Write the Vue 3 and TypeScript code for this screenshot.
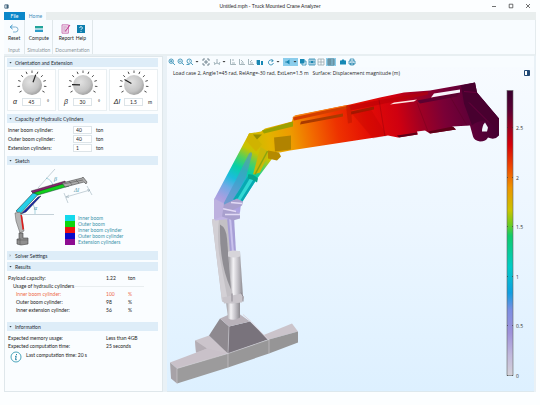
<script setup lang="ts">
import { ref } from 'vue'

interface Dial { id: string; symbol: string; unit: string; angle: number; value: string }
interface Tool { label: string; d: string; fill?: string; menu?: boolean; active?: boolean; tint?: string; gap?: boolean }

const dials = ref<Dial[]>([
  { id: 'alpha', symbol: 'α', unit: '°', angle: 20, value: '45' },
  { id: 'beta', symbol: 'β', unit: '°', angle: -88, value: '30' },
  { id: 'ext', symbol: 'Δl', unit: 'm', angle: -60, value: '1.5' },
])
const ticks = Array.from({ length: 11 }, (_, i) => -120 + i * 24)

const capacities = ref([
  { id: 'cap-inner', label: 'Inner boom cylinder:', value: '40' },
  { id: 'cap-outer', label: 'Outer boom cylinder:', value: '40' },
  { id: 'cap-ext', label: 'Extension cylinders:', value: '1' },
])

const legend = [
  { name: 'Inner boom', tone: 'cyan' },
  { name: 'Outer boom', tone: 'green' },
  { name: 'Inner boom cylinder', tone: 'red' },
  { name: 'Outer boom cylinder', tone: 'blue' },
  { name: 'Extension cylinders', tone: 'purple' },
]

const usage = [
  { name: 'Inner boom cylinder:', value: '100', alert: true },
  { name: 'Outer boom cylinder:', value: '98', alert: false },
  { name: 'Inner extension cylinder:', value: '56', alert: false },
]

const lens = 'M3.2 1a2.2 2.2 0 1 0 0 4.4a2.2 2.2 0 1 0 0-4.4M4.8 4.8L7 7'
const axes = 'M1.5 1v5.5h5.5M3 5h3'
const tools: Tool[] = [
  { label: 'Zoom in', d: lens + 'M2 3.2h2.4M3.2 2v2.4' },
  { label: 'Zoom out', d: lens + 'M2 3.2h2.4' },
  { label: 'Zoom box', d: lens + 'M.5 6.5h3M3 3h1', menu: true },
  { label: 'Zoom extents', d: 'M1 3V1h2M5 1h2v2M7 5v2H5M3 7H1V5M4 2v4M2 4h4', tint: '#59707c', gap: true },
  { label: 'Default view', d: 'M4 1v4M4 5L1 6.5M4 5l3 1.5M1 4l1 2M7 4l-1 2', tint: '#8aa0a8', menu: true, gap: true },
  { label: 'View XY', d: axes + 'M3 2h2', tint: '#8fa3ab', gap: true },
  { label: 'View YZ', d: axes + 'M3 2l2 2', tint: '#8fa3ab' },
  { label: 'View ZX', d: axes + 'M3 4l2-2', tint: '#8fa3ab' },
  { label: 'Projection', d: 'M1 2v4M3 2v4', fill: 'M1 2h3v5H1zM5 3h2v4H5z' },
  { label: 'Rotate', d: 'M6 3A2.5 2.5 0 1 0 6.4 5M4.5 1l1.8 2-2 .8', menu: true, gap: true },
  { label: 'Scene light', d: 'M1 4h3', fill: 'M5.5 1.5v5L2 4z', menu: true, active: true, gap: true },
  { label: 'Transparency', d: 'M3 3h4v4H3z', fill: 'M1 1h4.5v4.5H1z' },
  { label: 'Wireframe', d: 'M1 1h6v6H1zM3 1v6M5 1v6M1 4h6', fill: 'M3 3h2v2H3z' },
  { label: 'Show grid', d: 'M1 1h6v6H1zM4 1v6M1 4h6', tint: '#9aa9ae' },
  { label: 'Show legend', d: 'M1 1h6v6H1zM3 1v6M1 3h6M1 5h6', tint: '#58757f', active: true },
  { label: 'Snapshot', d: '', fill: 'M1 2.5h1.5l.7-1h1.7l.6 1H7v4H1z', gap: true },
  { label: 'Print', d: 'M2.2 3V1h3.6v2M1 3h6v3H1zM2.4 5h3.2v2H2.4z' },
]

const scale = [
  { y: 128, text: '2.5' }, { y: 178, text: '2' }, { y: 227, text: '1.5' },
  { y: 277, text: '1' }, { y: 326, text: '0.5' }, { y: 376, text: '0' },
]
</script>

<template>
  <div class="app">
    <header class="titlebar">
      <svg class="app-icon" viewBox="0 0 6 6"><path d="M1 1h4v4H1z" fill="#fff" stroke="#3d627c" /><path d="M3 1h2v4H3z" fill="#3d627c" /></svg>
      <h1>Untitled.mph - Truck Mounted Crane Analyzer</h1>
      <div class="win-controls">
        <button aria-label="Minimize"><svg viewBox="0 0 6 6"><path d="M1 3.5h4" /></svg></button>
        <button aria-label="Maximize"><svg viewBox="0 0 6 6"><path d="M1.2 1.2h3.6v3.6H1.2z" /></svg></button>
        <button aria-label="Close"><svg viewBox="0 0 6 6"><path d="M1 1l4 4M5 1L1 5" /></svg></button>
      </div>
    </header>

    <nav class="tabs">
      <button class="tab file">File</button>
      <button class="tab home">Home</button>
    </nav>

    <div class="ribbon">
      <section class="group">
        <div class="actions">
          <button>
            <svg viewBox="0 0 10 10"><path d="M1.5 3h5a2 2 0 0 1 0 5H4" fill="none" stroke="#7fb2d2" /><path d="M3.5 1L1.2 3l2.3 2" fill="none" stroke="#2b8fc5" /></svg>
            Reset
          </button>
        </div>
        <h2>Input</h2>
      </section>
      <section class="group">
        <div class="actions">
          <button>
            <svg viewBox="0 0 10 10"><path d="M1 2h8v2.4H1z" fill="#20a39a" /><path d="M1 5.6h8V8H1z" fill="#2c9bc6" /></svg>
            Compute
          </button>
        </div>
        <h2>Simulation</h2>
      </section>
      <section class="group">
        <div class="actions">
          <button>
            <svg viewBox="0 0 10 10"><path d="M1 .8h6.4v8.4H1z" fill="#f7e3f2" stroke="#c264a8" stroke-width=".8" /><path d="M2.2 3h3.6M2.2 5h2.4M2.2 7h3.6" stroke="#a9679e" stroke-width=".7" /><path d="M9.4 1.2L5 7l-1 .8.3-1.4L8.5.7z" fill="#c0398f" /></svg>
            Report
          </button>
          <button>
            <svg viewBox="0 0 10 10"><path d="M1 1h8v8H1z" fill="#0e7fae" /><path d="M3.7 3.9a1.3 1.3 0 1 1 1.9 1.2q-.6.3-.6.9M5 6.9v1" fill="none" stroke="#fff" stroke-width=".9" /></svg>
            Help
          </button>
        </div>
        <h2>Documentation</h2>
      </section>
    </div>

    <main class="workspace">
      <aside class="panel">
        <h3 class="bar"><i class="open"></i>Orientation and Extension</h3>
        <div class="dials">
          <div v-for="d in dials" :key="d.id" class="dial">
            <svg viewBox="0 0 30 26">
              <defs>
                <radialGradient :id="`knob-${d.id}`" cx=".38" cy=".35" r=".8">
                  <stop offset="0" stop-color="#e2e2e2" /><stop offset=".6" stop-color="#c4c4c4" /><stop offset="1" stop-color="#8c8c8c" />
                </radialGradient>
              </defs>
              <path v-for="t in ticks" :key="t" d="M15 3V.5" :transform="`rotate(${t} 15 15)`" stroke="#333" stroke-width=".8" />
              <circle cx="15" cy="15" r="10" :fill="`url(#knob-${d.id})`" />
              <path d="M15 12V4" :transform="`rotate(${d.angle} 15 15)`" stroke="#222" stroke-width="1.2" />
            </svg>
            <div class="dial-field">
              <label :for="d.id">{{ d.symbol }}</label>
              <input :id="d.id" v-model="d.value" type="text">
              <span>{{ d.unit }}</span>
            </div>
          </div>
        </div>

        <h3 class="bar"><i class="open"></i>Capacity of Hydraulic Cylinders</h3>
        <div class="capacities">
          <div v-for="c in capacities" :key="c.id" class="cap-row">
            <label :for="c.id">{{ c.label }}</label>
            <input :id="c.id" v-model="c.value" type="text">
            <span>ton</span>
          </div>
        </div>

        <h3 class="bar"><i class="open"></i>Sketch</h3>
        <div class="sketch">
          <svg class="sketch-art" viewBox="0 0 92 84">
            <g fill="none" stroke="#8fa5b0" stroke-width=".5">
              <path d="M14 48.5h33M31 22L48 3" />
              <path d="M57 27l4 10M80 20l5 9M59 31l24-7M59 31l3-2M59 31l3 .6M83 24l-3-.4M83 24l-2 2" />
              <path d="M39 12q6 2 7 8M26 38q3 5 2 10" stroke="#55a8bd" />
            </g>
            <path d="M9 45L26 27l6 .5L13 48z" fill="#25cfe8" stroke="#222" stroke-width=".5" />
            <path d="M14 48L31 31l3-1L19 46z" fill="#1624a8" stroke="#111" stroke-width=".4" />
            <path d="M25 26l32-9 5 3-31 9z" fill="#10cf1c" stroke="#143" stroke-width=".5" />
            <path d="M24 25L58 15l1 2L26 27z" fill="#86246e" stroke="#222" stroke-width=".4" />
            <path d="M55 17l20-5 1-1 4 5-1 2-2-2-19 5z" fill="#aaa" stroke="#444" stroke-width=".6" />
            <path d="M56 18l20-4M62 15l3 4M69 14l3 3" stroke="#555" stroke-width=".6" />
            <path d="M8 47l5-1 2 5 2 14-4 2-4-12z" fill="#b5b5b5" stroke="#555" stroke-width=".5" />
            <path d="M13.500 49h1.500l2 14-1.500 1z" fill="#e01a1a" />
            <path d="M12 67h4v5h5v6l-7 1-4-1v-5h2z" fill="#8f8f8f" stroke="#444" stroke-width=".6" />
            <path d="M10 74h11M13 72v7" stroke="#555" stroke-width=".5" />
            <g class="greek"><text x="47" y="15">β</text><text x="27" y="44">α</text><text x="67" y="26">Δl</text></g>
          </svg>
          <ul class="legend">
            <li v-for="l in legend" :key="l.name"><i :class="l.tone"></i>{{ l.name }}</li>
          </ul>
        </div>

        <h3 class="bar"><i class="closed"></i>Solver Settings</h3>
        <h3 class="bar"><i class="open"></i>Results</h3>
        <table class="results">
          <tbody>
            <tr><th>Payload capacity:</th><td>1.22</td><td>ton</td></tr>
            <tr class="sub"><th colspan="3"><div>Usage of hydraulic cylinders</div></th></tr>
            <tr v-for="u in usage" :key="u.name" class="nested" :class="{ alert: u.alert }">
              <th>{{ u.name }}</th><td>{{ u.value }}</td><td>%</td>
            </tr>
          </tbody>
        </table>

        <h3 class="bar"><i class="open"></i>Information</h3>
        <table class="results info-table">
          <tbody>
            <tr><th>Expected memory usage:</th><td>Less than 4GB</td></tr>
            <tr><th>Expected computation time:</th><td>25 seconds</td></tr>
          </tbody>
        </table>
        <p class="note">
          <svg viewBox="0 0 12 12"><circle cx="6" cy="6" r="5" fill="#fff" stroke="#3a9cb4" stroke-width=".9" /><path d="M6.500 3v1.200M5 5.300h1.200L5.500 8.700h1.300" fill="none" stroke="#2383a5" stroke-width="1" /></svg>
          <span>Last computation time: 20 s</span>
        </p>
      </aside>

      <section class="graphics">
        <div class="toolbar">
          <button v-for="t in tools" :key="t.label" :aria-label="t.label" :class="{ active: t.active, gap: t.gap }">
            <svg viewBox="0 0 8 8">
              <path v-if="t.fill" :d="t.fill" fill="#1688b5" />
              <path :d="t.d" fill="none" :stroke="t.tint ?? '#2585ae'" stroke-width=".8" />
            </svg>
            <i v-if="t.menu" class="caret"></i>
          </button>
        </div>
        <div class="canvas">
          <div class="caption">
            <p>Load case 2, Angle1=45 rad, RelAng=-30 rad, ExtLen=1.5 m&nbsp; &nbsp;Surface: Displacement magnitude (m)</p>
            <svg viewBox="0 0 6 6"><path d="M.5.5h5v5h-5z" fill="#fff" stroke="#234a76" /><path d="M3 .5h2.500v5H3z" fill="#234a76" /></svg>
          </div>
          <svg class="scene" viewBox="167 80 367 311">
            <defs>
              <linearGradient id="boom" gradientUnits="userSpaceOnUse" x1="247" y1="150" x2="500" y2="104">
                <stop offset="0" stop-color="#c3bd00" /><stop offset=".09" stop-color="#e2b400" />
                <stop offset=".18" stop-color="#ee9a00" /><stop offset=".26" stop-color="#f26a00" />
                <stop offset=".36" stop-color="#ee3200" /><stop offset=".48" stop-color="#e40d04" />
                <stop offset=".6" stop-color="#cf0010" /><stop offset=".68" stop-color="#a30022" />
                <stop offset=".78" stop-color="#7a0036" /><stop offset=".9" stop-color="#580038" />
                <stop offset="1" stop-color="#3d002e" />
              </linearGradient>
              <linearGradient id="inner" gradientUnits="userSpaceOnUse" x1="264" y1="142" x2="222" y2="218">
                <stop offset="0" stop-color="#ddb600" /><stop offset=".16" stop-color="#c8c400" />
                <stop offset=".28" stop-color="#52d05c" /><stop offset=".4" stop-color="#08cfa6" />
                <stop offset=".54" stop-color="#1bbddc" /><stop offset=".66" stop-color="#6faae6" />
                <stop offset=".8" stop-color="#a99fe0" /><stop offset="1" stop-color="#c2b6e4" />
              </linearGradient>
              <linearGradient id="steel" x1="0" x2="1" y1="0" y2="0">
                <stop offset="0" stop-color="#99979d" /><stop offset=".35" stop-color="#f3f2f5" />
                <stop offset=".65" stop-color="#c6c4ca" /><stop offset="1" stop-color="#8c8a90" />
              </linearGradient>
              <linearGradient id="bar" x1="0" x2="0" y1="0" y2="1">
                <stop offset="0" stop-color="#38002e" /><stop offset=".07" stop-color="#5c0034" />
                <stop offset=".14" stop-color="#a3001d" /><stop offset=".19" stop-color="#d60008" />
                <stop offset=".27" stop-color="#f04a00" /><stop offset=".34" stop-color="#ee9400" />
                <stop offset=".42" stop-color="#cbc400" /><stop offset=".47" stop-color="#6dcc20" />
                <stop offset=".51" stop-color="#10cc6c" /><stop offset=".62" stop-color="#00ccc8" />
                <stop offset=".71" stop-color="#109fe2" /><stop offset=".77" stop-color="#7c8ee2" />
                <stop offset=".85" stop-color="#9f92da" /><stop offset=".93" stop-color="#c1b9dc" />
                <stop offset="1" stop-color="#d3d1d8" />
              </linearGradient>
            </defs>

            <!-- concrete base -->
            <path d="M195 341L209 336L228 353L208 361L196 353z" fill="#cbc4cb" />
            <path d="M195 341L207 349L200 352L196 353z" fill="#b4adb4" />
            <path d="M170 363L207 349L228 354L177 369z" fill="#c9c1c9" />
            <path d="M170 363l7 6v15l-6-5z" fill="#a7a2a7" />
            <path d="M177 369L228 354V368L177 384z" fill="#9c9b9c" />
            <path d="M228 354L269 340V354L228 368z" fill="#989798" />
            <path d="M260 337L292 324L298 332L269 340z" fill="#cbc4cb" />
            <path d="M269 340L298 332V343L269 354z" fill="#969596" />
            <path d="M220 319L229 327L228 354L209 336z" fill="#8e898f" />
            <path d="M229 327L250 322L268 340L228 354z" fill="#79737c" />
            <path d="M220 319L236 312L250 322L229 327z" fill="#b9b2ba" />
            <path d="M243 315l8 7 17 18" fill="none" stroke="#dcd5de" stroke-width="1" />
            <path d="M177 369v15M228 354v14M269 340v14M229 327l-1 27M177 369l51-15 41-14" fill="none" stroke="#d8d4d9" stroke-width=".5" />

            <!-- slewing column -->
            <path d="M226 302h14v16q-6 4-12 1z" fill="url(#steel)" />
            <path d="M212 220L228 218L231 252L242 296L242 302Q232 306 222 302z" fill="#c3c0c5" />
            <path d="M212 220h7q-2 14 0 34l9 48-6-1z" fill="#d3d0d5" />
            <path d="M220 225Q226 228 227 239L231 290Q219 264 220 225z" fill="#8f8d93" />
            <path d="M227 218L234 217L236 253H230z" fill="#a79fd6" />
            <path d="M229 218h2l3 35h-2z" fill="#c9c2ec" />
            <path d="M228 252H240L243 297L233 300z" fill="url(#steel)" />
            <path d="M228 252q6-2 12 0v5q-6 2-12 0z" fill="#d7d5da" />
            <path d="M222 298L242 294L244 298L242 303L224 304z" fill="#c9c5cb" />
            <path d="M232 302v-8M241 293l2 4v5" fill="none" stroke="#8f8b93" stroke-width="1" />

            <!-- inner boom -->
            <path d="M249 134L265 133L280 141L276 154L258 178L241 204L240 213L235 219L215 221L214 200z" fill="url(#inner)" />
            <path d="M249 154Q252 151 252 155L246 178L229 208L222 207Q236 181 249 154z" fill="#4b98c6" fill-opacity=".65" />
            <path d="M262 142L272 147L260 173L253 175z" fill="#cab808" />
            <path d="M270 147L255 175" stroke="#8aa510" stroke-width="1.5" />
            <path d="M249 175L257 179L242 203L233 200z" fill="#08a9b2" />
            <path d="M251 177l3 2-15 24-3-1z" fill="#32d8d4" />
            <path d="M248 175q5-1 10 4l-1 4q-4-3-9-4z" fill="#08a58c" />
            <path d="M220 207L237 199L243 202L242 206L232 211L240 214V219L233 221L222 217z" fill="#a9a0ce" />
            <path d="M222 209l14 3M225 215h15M231 203l11 1" stroke="#e2daf5" stroke-width="1.5" />
            <path d="M214 199l10 5-2 13-8 3z" fill="#bdb1df" />

            <!-- outer and telescopic boom -->
            <path d="M261 132L265 129L292 122L293 118L296 116L350 105L380 98L404 93L430 91L475 83L477 93L499 119V136Q495 141 488 138Q486 142 480 142Q474 141 473 137L470 126L452 127L456 130L430 134L425 131L417 132L418 135L398 138L388 136L290 151L280 153L270 153L258 146L249 134z" fill="url(#boom)" />
            <path d="M262 131L293 122V127L264 134z" fill="#9ba100" />
            <path d="M249 134L260 135L257 139L262 145L256 152L246 141z" fill="#d0b300" />
            <path d="M253 135h9l-5 5z" fill="#968d00" />
            <path d="M274 138L291 136V150L275 152z" fill="#b18300" />
            <path d="M268 151L279 153L281 157L277 161L268 159z" fill="#b58a00" />
            <path d="M293 118L348 106V109L294 121z" fill="#d33d00" />
            <path d="M293 118q1-2 4-2l50-10" fill="none" stroke="#f67e12" stroke-width="1" />
            <path d="M301 122L343 114V117L300 125z" fill="#a93a00" />
            <path d="M351 112L374 107V110L351 115z" fill="#a11b00" />
            <path d="M349 106L428 92V95L351 111z" fill="#b80006" fill-opacity=".6" />
            <path d="M351 113L371 110L387 136L373 139z" fill="#b50000" fill-opacity=".25" />
            <path d="M346 106h5l1 17-4 1z" fill="#c01800" fill-opacity=".6" />
            <path d="M390 105L394 103L417 100L414 102z" fill="#ffe6e2" />
            <path d="M417 101L460 93L457 97L420 104z" fill="#5c0030" />
            <path d="M434 94L460 90V93L431 98z" fill="#f6f2fa" />
            <path d="M397 136L417 133V135L399 138zM428 132L453 127L456 130L430 134z" fill="#5e0018" />
            <path d="M417 103l11 29M450 97l17 29M379 100l6 37" stroke="#4b0010" stroke-width=".5" opacity=".45" />
            <path d="M461 86L475 83L477 93L499 119V134Q496 125 488 122Q478 120 472 126L464 104z" fill="#48002f" />
            <path d="M464 92l12 1M469 103l20 20" stroke="#780044" stroke-width=".7" />
            <path d="M485 123L488 128L487 132H482Q482 126 485 123z" fill="#f2f7fd" />

            <!-- colour scale -->
            <rect x="507" y="91" width="6" height="285" fill="url(#bar)" stroke="#666" stroke-width=".6" />
            <g v-for="s in scale" :key="s.text">
              <path :d="`M507 ${s.y}h1M512 ${s.y}h1`" stroke="#333" stroke-width=".6" />
              <text class="scale-text" x="516" :y="s.y + 2">{{ s.text }}</text>
            </g>
          </svg>
        </div>
      </section>
    </main>
  </div>
</template>

<style>
body { background: #fcfeff; }
</style>

<style scoped>
.app {
  min-height: 100vh;
  box-sizing: border-box;
  padding: 0 4px 13px;
  display: flex;
  flex-direction: column;
  font: 5px/8px Lato, "Open Sans", sans-serif;
  color: #1c1c1c;
}
h1, h2, h3, p, ul { margin: 0; padding: 0; font-size: 5px; font-weight: 400; list-style: none; }
button { font: inherit; color: inherit; border: 0; padding: 0; background: none; }
svg { display: block; }
input {
  box-sizing: border-box;
  width: 19px;
  height: 8px;
  padding: 0 2px;
  border: 1px solid #dde4e8;
  background: #fff;
  font: inherit;
  line-height: 6px;
  color: inherit;
}

.titlebar { display: grid; grid-template-columns: 1fr auto 1fr; align-items: center; height: 12px; }
.titlebar h1 { font-family: "Liberation Sans", Arial, sans-serif; }
.app-icon { width: 5px; height: 5px; }
.win-controls { display: flex; justify-content: flex-end; gap: 11px; padding-right: 5px; }
.win-controls svg { width: 6px; height: 6px; fill: none; stroke: #333; stroke-width: .7; }

.tabs { display: flex; height: 8px; background: #e9eeee; }
.tab { width: 21px; line-height: 8px; }
.file { background: #0b87c9; color: #fff; }
.home { background: #f8fcff; color: #3f8dbb; }

.ribbon { display: flex; height: 34px; background: #f8fcff; border-bottom: 2px solid #e8eff2; border-right: 1px solid #e4ebee; }
.group { display: flex; flex-direction: column; justify-content: space-between; padding: 4px 2px 0; border-right: 1px solid #e0e7ea; }
.group:first-child { padding: 4px 4px 0; }
.actions { display: flex; justify-content: center; gap: 2px; }
.actions button { display: flex; flex-direction: column; align-items: center; }
.actions svg { width: 10px; height: 10px; }
.group h2 { color: #8c969b; text-align: center; line-height: 8px; }

.workspace { flex: 1; display: flex; gap: 4px; background: #e9f1f6; }
.panel {
  box-sizing: border-box;
  width: 159px;
  flex: none;
  padding: 1px 4px 0 2px;
  background: #fafdff;
  border: 1px solid #dfe7eb;
}
.bar { display: flex; align-items: center; height: 9px; margin-bottom: 2px; padding-left: 2px; background: #deedf8; color: #1f2c34; }
.bar i { width: 3px; margin-right: 3px; }
.open { height: 2px; background: #37474f; clip-path: polygon(0 0, 100% 0, 50% 100%); }
.closed { height: 3px; background: #a9b5bb; clip-path: polygon(20% 0, 70% 50%, 20% 100%); }

.dials { display: grid; grid-template-columns: repeat(3, 1fr); gap: 2px; margin-bottom: 3px; }
.dial { display: flex; flex-direction: column; align-items: center; gap: 2px; height: 40px; background: #fff; border: 1px solid #e9eff2; }
.dial > svg { width: 30px; height: 26px; }
.dial-field { display: grid; grid-template-columns: 10px 19px 10px; align-items: center; gap: 2px; text-align: center; }
.dial-field input { text-align: center; }
.dial-field label { font: italic 7px/8px "Liberation Sans", sans-serif; }

.capacities { display: flex; flex-direction: column; gap: 1px; padding: 1px 0 4px; }
.cap-row { display: grid; grid-template-columns: 61px 19px auto; gap: 4px; align-items: center; margin-left: 1px; }

.sketch { display: flex; align-items: flex-end; height: 83px; margin-bottom: 1px; }
.sketch-art { width: 92px; height: 84px; flex: none; }
.greek text { font: italic 6px "Liberation Serif", serif; fill: #3f95ab; }
.legend { margin: 0 0 5px -34px; color: #3d94ab; line-height: 6px; }
.legend li { display: flex; align-items: center; gap: 3px; }
.legend i { width: 10px; height: 6px; }
.cyan { background: #13d9ec; }
.green { background: #0ed60e; }
.red { background: #ee1212; }
.blue { background: #0a0ac8; }
.purple { background: #8d0c91; }

.results { width: 100%; border-collapse: collapse; table-layout: fixed; margin: 3px 0 8px; }
.results th { width: 98px; padding: 0 0 0 1px; font-weight: 400; text-align: left; }
.results td { width: 22px; padding: 0; white-space: nowrap; }
.results td:last-child { width: auto; }
.results .sub div { display: flex; align-items: center; gap: 1px; padding: 0 14px 0 5px; }
.sub div::after { content: ""; flex: 1; border-top: 1px solid #e9eef0; }
.results .nested th { padding-left: 9px; }
.alert { color: #ee6a48; }
.results.info-table { margin: 3px 0 1px; }

.note { display: flex; gap: 4px; padding-left: 3px; }
.note svg { width: 12px; height: 12px; }

.graphics { flex: 1; min-width: 0; margin-right: 2px; display: flex; flex-direction: column; background: #f8fcff; border-bottom: 1px solid #dce8ee; }
.toolbar { display: flex; align-items: center; height: 11px; padding-left: 1px; gap: 1px; }
.toolbar button { display: flex; align-items: center; gap: 1px; }
.toolbar svg { width: 8px; height: 8px; }
.toolbar .gap { margin-left: 2px; }
.caret { width: 4px; height: 2px; background: #333; clip-path: polygon(0 0, 100% 0, 50% 100%); }
.toolbar .active { padding: 0 1px; background: #8bcdec; }
.canvas { flex: 1; display: flex; flex-direction: column; background: linear-gradient(#f7fbff, #ecf6ff 50%, #ddf0ff); }
.caption { display: flex; justify-content: space-between; align-items: center; height: 12px; padding: 0 4px 0 6px; }
.caption p { font: 5px/12px "Open Sans", sans-serif; }
.caption svg { width: 6px; height: 6px; }
.scene { width: 100%; flex: 1; min-height: 0; }
.scale-text { font: 5px "Open Sans", sans-serif; fill: #333; }
</style>
